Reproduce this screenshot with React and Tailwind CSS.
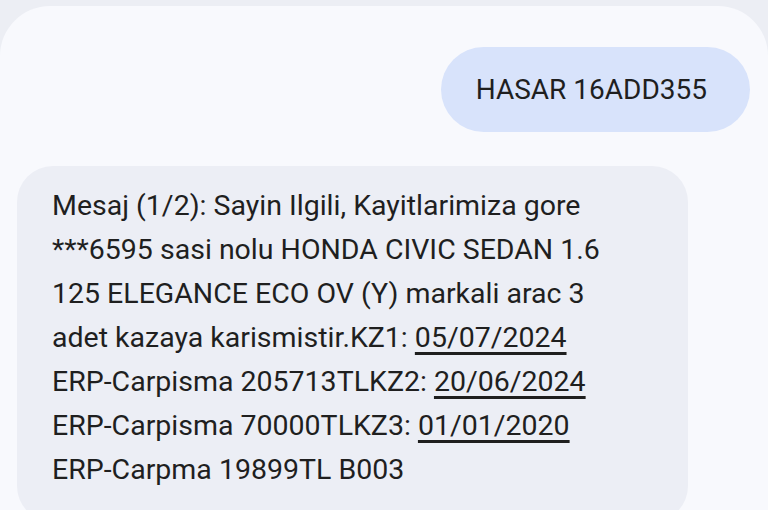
export default function App() {
  const dates = "underline decoration-[2.5px] underline-offset-[5px]";
  return (
    <div className="h-[510px] overflow-hidden bg-[#eceef4] pt-[6px] font-['Roboto',sans-serif] text-[#1f1f1f]">
      <div className="h-full rounded-t-[50px] bg-[#f8f9fd]">
        <div className="flex justify-end pr-[18px] pt-[41px]">
          <div className="flex h-[85px] items-center rounded-full bg-[#d8e3fb] pl-[35px] pr-[43px] text-[28px]">
            HASAR 16ADD355
          </div>
        </div>
        <div className="ml-[17px] mt-[34px] w-[671px] rounded-[36px] bg-[#eceef5] pl-[35px] pt-[18px] pb-[30px] text-[28.5px] leading-[44px]">
          <div>Mesaj (1/2): Sayin Ilgili, Kayitlarimiza gore</div>
          <div>***6595 sasi nolu HONDA CIVIC SEDAN 1.6</div>
          <div>125 ELEGANCE ECO OV (Y) markali arac 3</div>
          <div>
            adet kazaya karismistir.KZ1: <span className={dates}>05/07/2024</span>
          </div>
          <div>
            ERP-Carpisma 205713TLKZ2: <span className={dates}>20/06/2024</span>
          </div>
          <div>
            ERP-Carpisma 70000TLKZ3: <span className={dates}>01/01/2020</span>
          </div>
          <div>ERP-Carpma 19899TL B003</div>
        </div>
      </div>
    </div>
  );
}
